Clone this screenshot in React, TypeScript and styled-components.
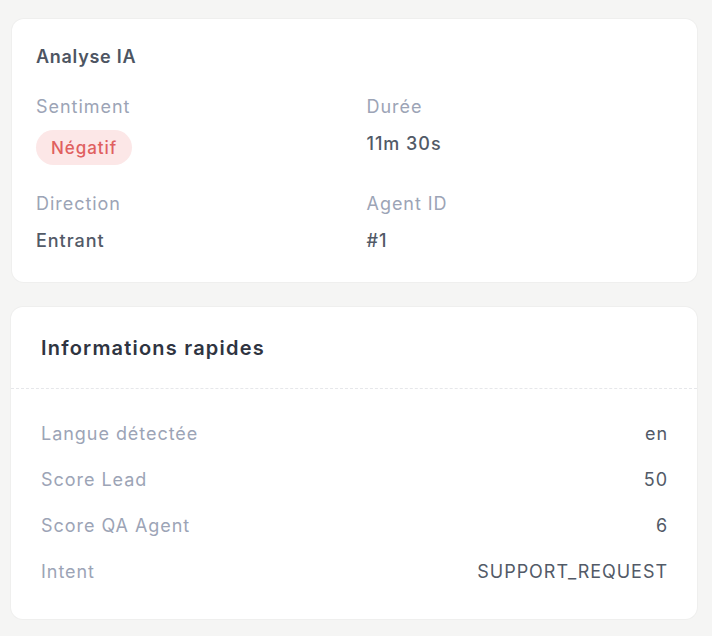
import styled, { createGlobalStyle } from "styled-components";

const Global = createGlobalStyle`
  body {
    margin: 0;
    background: #f5f5f4;
    font-family: Inter, "Noto Sans", sans-serif;
    letter-spacing: 0.06em;
  }
`

const Page = styled.div`
  display: flex;
  flex-direction: column;
  gap: 25px;
  padding: 19px 15px 16px 11px;
`

const Card = styled.section`
  background: #ffffff;
  border-radius: 12px;
  box-shadow: 0 0 0 1px #efefee;
`

const AnalyseCard = styled(Card)`
  margin-left: 1px;
  padding: 24px 24px 27px;
`

const AnalyseTitle = styled.h3`
  margin: 0 0 22px;
  font-size: 18px;
  line-height: 28px;
  font-weight: 600;
  letter-spacing: 0.04em;
  color: #4d5562;
`

const Grid = styled.div`
  display: grid;
  grid-template-columns: 1fr 1fr;
  column-gap: 24px;
  row-gap: 25px;
`

const Field = styled.div`
  display: flex;
  flex-direction: column;
  gap: 9px;
`

const Label = styled.span`
  font-size: 18px;
  line-height: 28px;
  color: #9ca4b6;
`

const Value = styled.span`
  font-size: 18px;
  line-height: 28px;
  font-weight: 500;
  color: #525a67;
`

const Badge = styled.span`
  align-self: flex-start;
  height: 35px;
  padding: 0 15px;
  display: flex;
  align-items: center;
  border-radius: 999px;
  background: #fce7e7;
  color: #e0605f;
  font-size: 17px;
  font-weight: 500;
`

const InfoHeader = styled.div`
  padding: 27px 29px 26px 30px;
  border-bottom: 1px dashed #e6e7ea;
`

const InfoTitle = styled.h3`
  margin: 0;
  font-size: 20px;
  line-height: 28px;
  font-weight: 600;
  letter-spacing: 0.06em;
  color: #2f3441;
`

const InfoBody = styled.div`
  display: flex;
  flex-direction: column;
  gap: 18px;
  padding: 31px 29px 33px 30px;
`

const InfoRow = styled.div`
  display: flex;
  justify-content: space-between;
  align-items: center;
  font-size: 18px;
  line-height: 28px;
  span:first-child {
    color: #9ca4b6;
  }
  span:last-child {
    color: #525a67;
  }
`

const infos = [
  ["Langue détectée", "en"],
  ["Score Lead", "50"],
  ["Score QA Agent", "6"],
  ["Intent", "SUPPORT_REQUEST"],
]

const App = () => {
  return (
    <Page>
      <Global />
      <AnalyseCard>
        <AnalyseTitle>Analyse IA</AnalyseTitle>
        <Grid>
          <Field>
            <Label>Sentiment</Label>
            <Badge>Négatif</Badge>
          </Field>
          <Field>
            <Label>Durée</Label>
            <Value>11m 30s</Value>
          </Field>
          <Field>
            <Label>Direction</Label>
            <Value>Entrant</Value>
          </Field>
          <Field>
            <Label>Agent ID</Label>
            <Value>#1</Value>
          </Field>
        </Grid>
      </AnalyseCard>

      <Card>
        <InfoHeader>
          <InfoTitle>Informations rapides</InfoTitle>
        </InfoHeader>
        <InfoBody>
          {infos.map(([k, v]) => (
            <InfoRow key={k}>
              <span>{k}</span>
              <span>{v}</span>
            </InfoRow>
          ))}
        </InfoBody>
      </Card>
    </Page>
  )
}

export default App
